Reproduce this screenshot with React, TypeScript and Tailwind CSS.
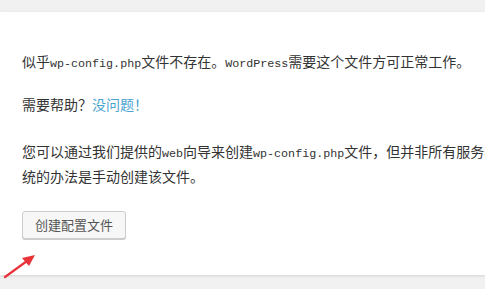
export default function App() {
  const code = 'font-["Liberation_Mono",monospace] text-[11.7px]'
  return (
    <div className="h-[289px] w-[485px] overflow-hidden bg-[#f1f1f1] pt-[12px] font-['Noto_Sans_CJK_SC',sans-serif] text-[14px] text-[#333]">
      <div className="relative w-[760px] bg-white pb-[36px] pl-[22px] pt-[38px] shadow-[0_1px_3px_rgba(0,0,0,0.13)]">
        <p className="leading-[22px]">
          似乎<span className={code}>wp-config.php</span>文件不存在。<span className={code}>WordPress</span>需要这个文件方可正常工作。
        </p>
        <p className="mt-[18px] leading-[22px]">
          需要帮助？<a href="#" className="text-[#4aa3d0]">没问题！</a>
        </p>
        <p className="mt-[25px] whitespace-nowrap leading-[22px]">
          您可以通过我们提供的<span className={code}>web</span>向导来创建<span className={code}>wp-config.php</span>文件，但并非所有服务器都支持。最传
          <br />
          统的办法是手动创建该文件。
        </p>
        <button className="mt-[24px] block h-[28px] w-[104px] rounded-[3px] border border-[#ccc] bg-[#f7f7f7] text-[13px] text-[#555] shadow-[0_1px_0_#ccc]">
          创建配置文件
        </button>
        <svg className="absolute left-[3px] top-[241px]" width="34" height="26" viewBox="0 0 34 26">
          <line x1="2" y1="24" x2="24" y2="8" stroke="#e8333a" strokeWidth="2.2" strokeLinecap="round" />
          <polygon points="32,2 19,5 26,13" fill="#e8333a" />
        </svg>
      </div>
    </div>
  )
}
